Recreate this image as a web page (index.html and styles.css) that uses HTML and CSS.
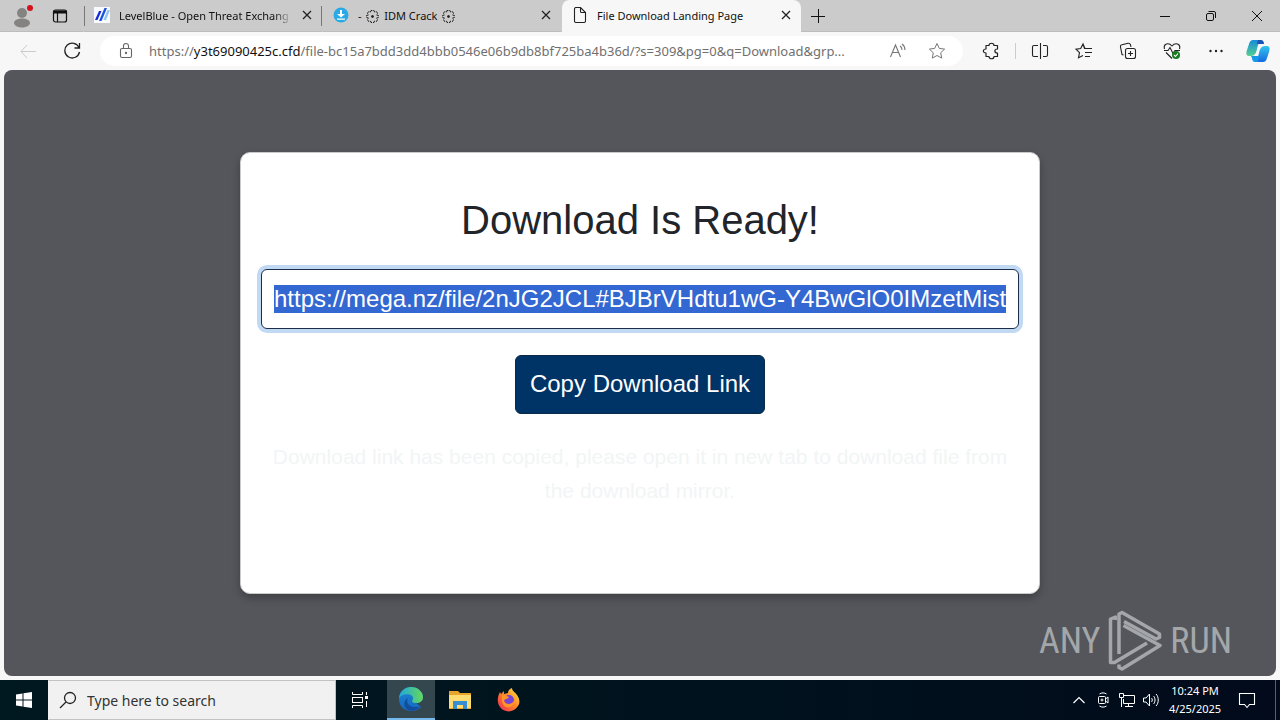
FILE: index.html
```html
<!DOCTYPE html>
<html lang="en">
<head>
<meta charset="utf-8">
<title>File Download Landing Page</title>
<link rel="stylesheet" href="styles.css">
</head>
<body>
<div class="desktop">
  <header class="browser">
    <div class="tabstrip">
      <button class="profile" aria-label="Profile"><svg width="22" height="24" viewBox="0 0 22 24"><circle cx="11" cy="9" r="5" fill="#858381"/><path d="M3 19c0-6 16-6 16 0-1 6-15 6-16 0z" fill="#858381"/><circle cx="19" cy="4" r="3" fill="#d4111d"/></svg></button>
      <button class="tab-actions" aria-label="Tab actions"><svg width="16" height="16" viewBox="0 0 16 16" fill="none" stroke="#111" stroke-width="1.200"><rect x="1.500" y="2" width="13" height="12" rx="2"/><path d="M2 3h12v2H2z" fill="#111"/><path d="M5.500 4v10"/></svg></button>
      <div class="tab tab-first">
        <svg width="16" height="16" viewBox="0 0 16 16"><path d="M0 0h16v16H0z" fill="#f7faff"/><path d="m1 13 4-9h2.500l-4 9z" fill="#142bd0"/><path d="m5 14 5.500-13H13L7.500 14z" fill="#1d4fe0"/><path d="m9.500 13 4-10H16l-4 10z" fill="#91c5f5"/></svg>
        <span class="tab-title fade">LevelBlue - Open Threat Exchang</span>
        <button class="close" aria-label="Close tab"><svg width="10" height="10" viewBox="0 0 10 10"><path d="m1 1 8 8M9 1 1 9" stroke="#222" stroke-width="1.300"/></svg></button>
      </div>
      <div class="tab">
        <svg width="16" height="16" viewBox="0 0 16 16"><circle cx="8" cy="8" r="7.500" fill="#29a9e5"/><path d="M7 3h2v4h3L8 10.500 4 7h3zM4 11.500h8v1.300H4z" fill="#fff"/></svg>
        <span class="tab-title">- <svg class="gear" width="13" height="13" viewBox="0 0 13 13" fill="none" stroke="#222"><path d="m4.500 2 .5-1.500h3L8.500 2l2-.5 1 2-1 1.500 2 .5v2l-2 .5 1 1.500-1 2-2-.5L8 12.500H5L4.500 11l-2 .5-1-2 1-1.500-2-.5v-2l2-.5-1-1.500 1-2z" stroke-dasharray="3 1"/><circle cx="6.500" cy="6.500" r="1" fill="#222"/></svg> IDM Crack <svg class="gear" width="13" height="13" viewBox="0 0 13 13" fill="none" stroke="#222"><path d="m4.500 2 .5-1.500h3L8.500 2l2-.5 1 2-1 1.500 2 .5v2l-2 .5 1 1.500-1 2-2-.5L8 12.500H5L4.500 11l-2 .5-1-2 1-1.500-2-.5v-2l2-.5-1-1.500 1-2z" stroke-dasharray="3 1"/><circle cx="6.500" cy="6.500" r="1" fill="#222"/></svg></span>
        <button class="close" aria-label="Close tab"><svg width="10" height="10" viewBox="0 0 10 10"><path d="m1 1 8 8M9 1 1 9" stroke="#222" stroke-width="1.300"/></svg></button>
      </div>
      <div class="tab active">
        <svg width="16" height="16" viewBox="0 0 16 16" fill="none" stroke="#222" stroke-width="1.100"><path d="M8.500.5H4A1.500 1.500 0 0 0 2.500 2v12A1.500 1.500 0 0 0 4 15.500h8a1.500 1.500 0 0 0 1.500-1.500V5.500zv4a1 1 0 0 0 1 1h4"/></svg>
        <span class="tab-title">File Download Landing Page</span>
        <button class="close" aria-label="Close tab"><svg width="10" height="10" viewBox="0 0 10 10"><path d="m1 1 8 8M9 1 1 9" stroke="#222" stroke-width="1.300"/></svg></button>
      </div>
      <button class="new-tab" aria-label="New tab"><svg width="14" height="14" viewBox="0 0 14 14"><path d="M7.500 0v14M0 7.500h14" stroke="#111"/></svg></button>
      <div class="window-controls">
        <button aria-label="Minimize"><svg width="12" height="12" viewBox="0 0 12 12"><path d="M1 6.500h10" stroke="#111"/></svg></button>
        <button aria-label="Restore"><svg width="12" height="12" viewBox="0 0 12 12" fill="none" stroke="#111"><rect x="1.500" y="3.500" width="7" height="7" rx="1.500"/><path d="M3.500 1.500H9A1.500 1.500 0 0 1 10.500 3v5"/></svg></button>
        <button aria-label="Close window"><svg width="12" height="12" viewBox="0 0 12 12"><path d="m1 1 10 10M11 1 1 11" stroke="#111"/></svg></button>
      </div>
    </div>
    <div class="toolbar">
      <button class="nav" aria-label="Back" disabled><svg width="18" height="18" viewBox="0 0 18 18" fill="none" stroke="#cbcbcb"><path d="M17 9.500H2M8 3 2 9.500 8 16"/></svg></button>
      <button class="nav" aria-label="Refresh"><svg width="18" height="18" viewBox="0 0 18 18" fill="none" stroke="#222" stroke-width="1.300"><path d="M16 5.500A7.400 7.400 0 1 0 16.500 10M16.500 1v5h-5"/></svg></button>
      <div class="address">
        <svg width="16" height="18" viewBox="0 0 16 18" fill="none" stroke="#666" stroke-width="1.100"><rect x="2.500" y="6.500" width="11" height="9" rx="1.500"/><path d="M5.500 6V4a2.500 2.500 0 0 1 5 0v2"/><circle cx="8" cy="11" r=".6" fill="#666"/></svg>
        <div class="url" role="textbox" aria-label="Address and search bar" contenteditable="true" spellcheck="false">https://<span class="domain">y3t69090425c.cfd</span>/file-bc15a7bdd3dd4bbb0546e06b9db8bf725ba4b36d/?s=309&amp;pg=0&amp;q=Download&amp;grp...</div>
        <button class="in-address" aria-label="Read aloud"><svg width="18" height="16" viewBox="0 0 18 16" fill="none" stroke="#777" stroke-width="1.100"><path d="m1.500 14 5-12 5 12M3.500 9.500h6M11 3c1.500 1 2 2 2 4M13 1c2 1.500 3 3.500 3 6"/></svg></button>
        <button class="in-address" aria-label="Add to favorites"><svg width="18" height="18" viewBox="0 0 18 18" fill="none" stroke="#777" stroke-linejoin="round"><path d="m9 1.500 2.300 4.900 5.300.7-3.900 3.700 1 5.300L9 13.500l-4.700 2.600 1-5.300-3.900-3.700 5.300-.7z"/></svg></button>
      </div>
      <div class="tools">
        <button class="extensions" aria-label="Extensions"><svg width="18" height="18" viewBox="0 0 18 18" fill="none" stroke="#222" stroke-width="1.200" stroke-linejoin="round"><path d="M4 3.500h3c0-3 5-3 5 0h3.500v3.500c-3.500 0-3.500 4 0 4v3.500H12c0 3-5 3-5 0H4V11c-3.500 0-3.500-4 0-4z"/></svg></button>
        <button aria-label="Split screen"><svg width="18" height="18" viewBox="0 0 18 18" fill="none" stroke="#222" stroke-width="1.100"><path d="M9.500 1v16M7 3.500H3A1.500 1.500 0 0 0 1.500 5v8A1.500 1.500 0 0 0 3 14.500h4M12 3.500h3A1.500 1.500 0 0 1 16.500 5v8a1.500 1.500 0 0 1-1.500 1.500h-3"/></svg></button>
        <button aria-label="Favorites"><svg width="18" height="18" viewBox="0 0 18 18" fill="none" stroke="#222" stroke-width="1.100"><path d="M11 6.500H9.500L8 2 5.700 6.500 1 7.200l3.500 3.500-1 5L8 13.500M8 2l2 4.500h7M10 10.500h7M10 14.500h5"/></svg></button>
        <button aria-label="Collections"><svg width="18" height="18" viewBox="0 0 18 18" fill="none" stroke="#222" stroke-width="1.100"><rect x="6.500" y="6.500" width="10" height="10" rx="2"/><path d="M11.500 9v5M9 11.500h5M4.500 13 3 12.500 1.500 5C1.200 3.500 2 3 3 2.800l6-1.500c1.500-.3 2 .2 2.500 1.500l.5 2"/></svg></button>
        <button aria-label="Browser essentials"><svg width="18" height="18" viewBox="0 0 18 18" fill="none" stroke="#222" stroke-width="1.100"><path d="M1.500 7C0 1 6 .5 9 4c3-3.500 9-3 7.500 3M1 8.500h4l2-3 3 6 2-3h5M3 10.500l6 6"/><circle cx="13" cy="13" r="4" fill="#177c20" stroke="none"/><path d="m11 13 1.500 1.500 2.500-3" stroke="#fff"/></svg></button>
        <button aria-label="Settings and more"><svg width="18" height="18" viewBox="0 0 18 18" fill="#222"><circle cx="3.500" cy="9" r="1.200"/><circle cx="9" cy="9" r="1.200"/><circle cx="14.500" cy="9" r="1.200"/></svg></button>
        <button class="copilot" aria-label="Copilot"><svg width="24" height="24" viewBox="0 0 24 24"><defs><linearGradient id="ca" x2="0" y2="1"><stop stop-color="#168bdc"/><stop offset="1" stop-color="#54cf91"/></linearGradient><linearGradient id="cb" x2="0" y2="1"><stop stop-color="#31c5ee"/><stop offset="1" stop-color="#1769e0"/></linearGradient></defs><path d="M7 1h8c-2 1-3 5-4 9s-2 7-6 7H3c-3 0-3-3-2-6L3 5c1-3 2-4 4-4z" fill="url(#ca)"/><path d="M12 1h3c2 0 3 2 3 4h-7z" fill="#1754b5"/><path d="M17 23H9c2-1 3-5 4-9s2-7 6-7h2c3 0 3 3 2 6l-2 6c-1 3-2 4-4 4z" fill="url(#cb)"/><path d="M12 23H9c-2 0-3-2-3-4l-1-2h8z" fill="#1799e8"/></svg></button>
      </div>
    </div>
  </header>
  <div class="viewport">
    <main class="page">
      <section class="card">
        <h1>Download Is Ready!</h1>
        <input class="link" id="link" type="text" aria-label="Download link" spellcheck="false" value="https://mega.nz/file/2nJG2JCL#BJBrVHdtu1wG-Y4BwGlO0IMzetMist">
        <button class="copy">Copy Download Link</button>
        <p>Download link has been copied, please open it in new tab to download file from the download mirror.</p>
      </section>
      <div class="watermark">
        <span>ANY</span>
        <svg width="54" height="62" viewBox="0 0 54 62" fill="none" stroke="#a4a7aa" stroke-width="3.500" stroke-linejoin="round"><path d="M7.500 10V7L2.500 9v43.500h4L39 33"/><path d="M11 44V4l3-1.500L51.500 24v3.500L48 29 16 11.500"/><path d="M15.500 15.500 52 35.500 14 59l-3-1.500v-3"/></svg>
        <span>RUN</span>
      </div>
    </main>
  </div>
  <footer class="taskbar">
    <button class="task start" aria-label="Start"><svg width="16" height="16" viewBox="0 0 16 16" fill="#fff"><path d="m0 2.500 6.500-1v6H0zM7.500 1.300 16 0v7.500H7.500zM0 8.500h6.500v6l-6.500-1zM7.500 8.500H16V16l-8.500-1.300z"/></svg></button>
    <label class="search"><svg width="18" height="18" viewBox="0 0 18 18" fill="none" stroke="#222" stroke-width="1.300"><circle cx="11" cy="7" r="5.500"/><path d="m7 11-6 6"/></svg><input type="text" placeholder="Type here to search" aria-label="Search"></label>
    <button class="task task-view" aria-label="Task view"><svg width="18" height="18" viewBox="0 0 18 18" fill="none" stroke="#fff"><path d="M1.500 1v2.500h10V1M1.500 17v-2.500h10V17M15.500 1v3M15.500 10v6"/><rect x="1.500" y="6.500" width="10" height="5"/><path d="M14 5h3v3h-3z" fill="#fff" stroke="none"/></svg></button>
    <button class="task running" aria-label="Microsoft Edge"><svg width="24" height="24" viewBox="0 0 24 24"><defs><linearGradient id="ea" x2="1"><stop stop-color="#20a6df"/><stop offset="1" stop-color="#65d85b"/></linearGradient><linearGradient id="eb" x2="0" y2="1"><stop stop-color="#1b86d6"/><stop offset="1" stop-color="#1668bd"/></linearGradient></defs><path d="M0 12C0 5 5 0 12 0s12 5 12 10c0 4-3 6-7 6-3 0-4-1-3-3l8 7c-6 6-16 5-20-1-1-2-2-4-2-7z" fill="url(#eb)"/><path d="M0 11C1 4 6 0 12 0c7 0 12 5 12 10 0 4-3 6-7 6-3 0-5-1-3-4C15 7 5 5 0 11z" fill="url(#ea)"/><path d="M9 11c-3 5 2 11 12 8.500C18 23 13 25 9 23c-5-3-5-9 0-12z" fill="#124e9c"/></svg></button>
    <button class="task" aria-label="File Explorer"><svg width="22" height="20" viewBox="0 0 22 20"><path d="M0 1h9l2 2h11v16H0z" fill="#e7a52c"/><path d="M0 5h22v13H0z" fill="#ffdc72"/><path d="M4 19v-8h14v8h-4v-4H8v4z" fill="#378fd1"/></svg></button>
    <button class="task" aria-label="Firefox"><svg width="24" height="24" viewBox="0 0 24 24"><defs><linearGradient id="fa" x1="1" x2="0" y2="1"><stop stop-color="#fff14d"/><stop offset=".45" stop-color="#ff8b24"/><stop offset="1" stop-color="#ed225d"/></linearGradient></defs><path d="m3 4 1 2 3-3v3l4-1c0-3 2-4 4-5 0 3 3 4 5 7 3 4 3 8 1 11-4 7-14 7-18 1C0 15 0 9 3 4z" fill="url(#fa)"/><circle cx="12" cy="12" r="5" fill="#7844d7"/><path d="M5 7c3-1 4 1 7 2-2 3-4 1-5 4 2 4 7 4 10 0 0 8-11 9-12 0z" fill="#ff9429"/></svg></button>
    <div class="tray">
      <button aria-label="Show hidden icons"><svg width="16" height="16" viewBox="0 0 16 16" fill="none" stroke="#fff" stroke-width="1.200"><path d="m2.500 11 5.500-5.500 5.500 5.500"/></svg></button>
      <button aria-label="Meet now"><svg width="16" height="16" viewBox="0 0 16 16" fill="none" stroke="#fff"><rect x="3.500" y="4.500" width="7" height="7" rx="1"/><circle cx="7" cy="8" r="1"/><path d="m10.500 7 2.500-2v6l-2.500-2M4.500 2c2-1.500 5-1.500 7 0M4.500 14c2 1.500 5 1.500 7 0"/></svg></button>
      <button aria-label="Network"><svg width="18" height="16" viewBox="0 0 18 16" fill="none" stroke="#fff"><path d="M6 3.500h10.500v8h-11V7M10.500 12v2.500M7 14.500h8M1.500 1.500h4v4h-4zM3.500 5.500V15"/></svg></button>
      <button aria-label="Volume"><svg width="18" height="16" viewBox="0 0 18 16" fill="none" stroke="#fff"><path d="M1.500 6v4H4l3.500 4V2L4 6zM9.500 6c1 1 1 3 0 4M11.500 4c2 2 2 6 0 8M14 2c3 3 3 9 0 12"/></svg></button>
      <button class="clock"><span>10:24 PM</span><span>4/25/2025</span></button>
      <button class="notifications" aria-label="Notifications"><svg width="18" height="18" viewBox="0 0 18 18" fill="none" stroke="#fff" stroke-width="1.100"><path d="M1.500 2.500h15v11h-5l-2.500 3-2.500-3h-5z"/></svg></button>
    </div>
  </footer>
</div>
<script src="script.js"></script>
</body>
</html>
```
FILE: styles.css
```css
* { box-sizing: border-box; }
body { margin: 0; font-family: "Noto Sans", "Open Sans", sans-serif; }
svg { flex: none; display: block; }
button { border: 0; padding: 0; background: none; color: inherit; font: inherit; display: flex; align-items: center; justify-content: center; }
.desktop { min-height: 100vh; display: flex; flex-direction: column; background: #f7f7f7; }
.tabstrip { display: flex; height: 32px; background: #cbcbcb; box-shadow: inset 0 -1px #bdbdbd; }
.profile { width: 44px; }
.tab-actions { width: 32px; margin-right: 7px; }
.tab { display: flex; align-items: center; width: 239px; padding: 0 9px 2px 10px; gap: 9px; font-size: 11px; color: #111; border-left: 1px solid #cbcbcb; }
.tab-first { background: linear-gradient(#777, #777) left center / 1px 20px no-repeat, linear-gradient(#777, #777) right center / 1px 20px no-repeat; }
.tab.active { width: 240px; background: #f7f7f7; border-radius: 8px 8px 0 0; }
.tab-title { flex: 1; min-width: 0; white-space: nowrap; overflow: hidden; }
.fade { mask-image: linear-gradient(90deg, #000 90%, transparent); }
.gear { display: inline-block; vertical-align: -3px; margin: 0 2px; }
.close { width: 12px; height: 20px; }
.new-tab { width: 34px; }
.window-controls { display: flex; margin-left: auto; }
.window-controls button { width: 46px; }
.toolbar { display: flex; align-items: center; height: 38px; padding-left: 6px; }
.nav { width: 44px; height: 32px; }
.address { flex: 1; min-width: 0; display: flex; align-items: center; height: 30px; margin-left: 6px; padding: 0 17px 0 18px; border-radius: 15px; background: #fff; }
.url { flex: 1; min-width: 0; margin-left: 15px; font-size: 13px; line-height: 20px; color: #707070; white-space: nowrap; overflow: hidden; outline: 0; }
.domain { color: #111; }
.in-address { width: 18px; margin-left: 21px; }
.tools { display: flex; align-items: center; padding: 0 2px 0 6px; }
.tools button { width: 44px; height: 28px; }
.tools .extensions { width: 47px; border-right: 1px solid #ccc; padding-right: 2px; margin-right: 2px; height: 16px; }
.tools .copilot { width: 40px; }
.viewport { flex: 1; display: flex; padding: 0 4px 4px; }
.page { flex: 1; position: relative; padding: 82px 16px; background: #55565c; border-radius: 8px; }
.card { max-width: 800px; min-height: 442px; margin: 0 auto; padding: 43px 20px; background: #fff; border: 1px solid #c9cacc; border-radius: 10px; box-shadow: 0 4px 8px #0004; font-family: "Liberation Sans", Arial, sans-serif; text-align: center; }
h1 { margin: 0 0 25px; font-size: 40px; line-height: 48px; font-weight: 400; color: #212529; }
.link { display: block; width: 100%; height: 60px; padding: 0 12px; border: 1px solid #1c2e4a; border-radius: 6px; outline: 0; box-shadow: 0 0 0 4px #c2d9f4; font: 24px "Liberation Sans", Arial, sans-serif; color: #212529; }
.link::selection { background: #3367d1; color: #fff; }
.copy { margin: 26px auto 0; height: 59px; padding: 0 14px 2px; border: 1px solid #0b2946; border-radius: 6px; background: #003366; color: #fff; font-size: 24px; }
.card p { margin: 26px 0 0; font-size: 21px; line-height: 34px; color: #f1f5f5; }
.watermark { position: absolute; right: 44px; bottom: 4px; display: flex; align-items: center; gap: 8px; font: 36px "Roboto Condensed", "Liberation Sans Narrow", sans-serif; color: #a4a7aa; }
.taskbar { display: flex; height: 40px; background: linear-gradient(90deg, #001820, #00121d 60%, #020a1b); color: #fff; }
.task { width: 49px; }
.start { width: 48px; }
.search { display: flex; align-items: center; width: 288px; padding-left: 10px; gap: 10px; background: #f1f1f1; border: 1px solid #c2c2c2; border-left-color: #f1f1f1; }
.search input { flex: 1; min-width: 0; padding: 0; border: 0; outline: 0; background: none; font: 14px "Noto Sans", "Open Sans", sans-serif; }
.search input::placeholder { color: #333; }
.task-view { width: 51px; padding-right: 4px; }
.running { width: 48px; background: #34474f; border-bottom: 2px solid #76b9ed; }
.tray { display: flex; margin-left: auto; padding-right: 4px; }
.tray button { width: 24px; }
.tray .clock { width: 64px; flex-direction: column; font-size: 11px; line-height: 18px; white-space: nowrap; }
.tray .notifications { width: 49px; border-right: 1px solid #59616c; padding-left: 0; padding-right: 8px; }
```
FILE: script.js
```js
const link = document.getElementById('link');
link.focus();
link.select();
```
